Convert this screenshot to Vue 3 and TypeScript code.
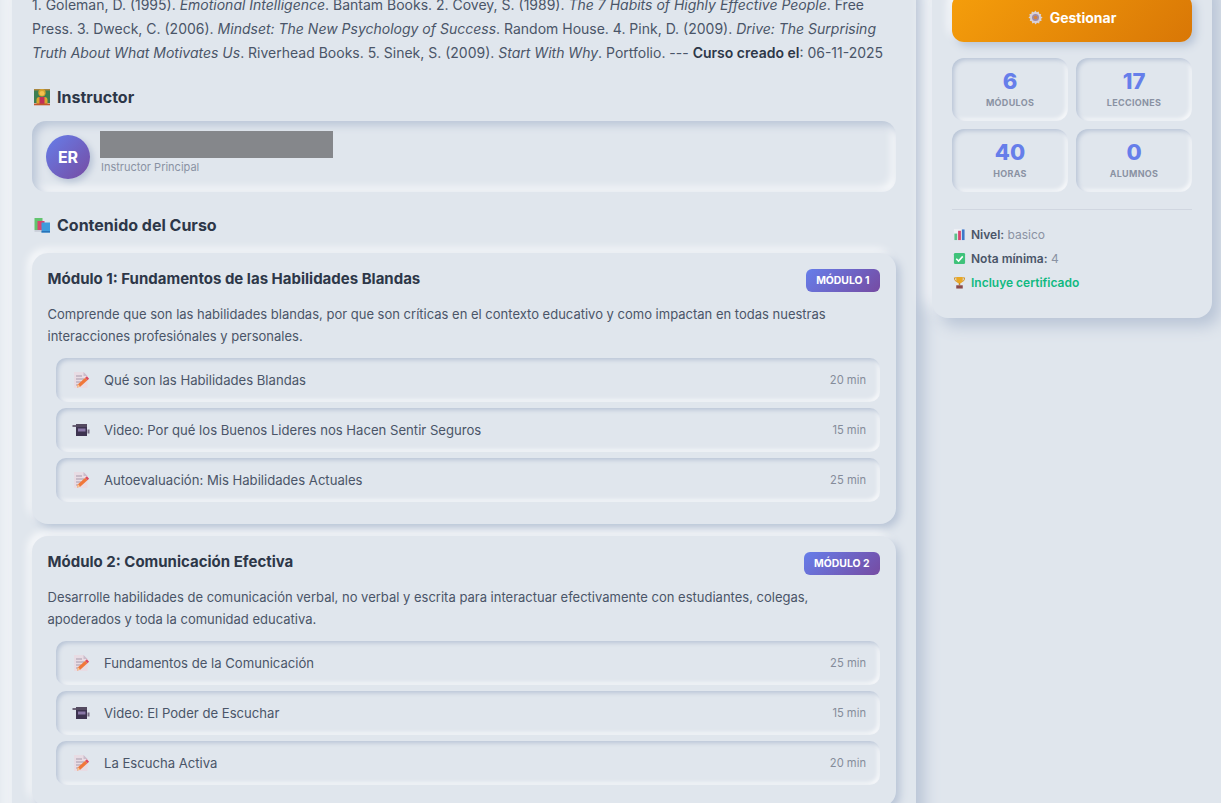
<script setup lang="ts">
interface Lesson {
  title: string
  duration: number
  kind: 'text' | 'video'
}

interface CourseModule {
  number: number
  title: string
  description: string
  lessons: Lesson[]
}

const stats = [
  { value: 6, label: 'Módulos' },
  { value: 17, label: 'Lecciones' },
  { value: 40, label: 'Horas' },
  { value: 0, label: 'Alumnos' },
]

const modules: CourseModule[] = [
  {
    number: 1,
    title: 'Módulo 1: Fundamentos de las Habilidades Blandas',
    description:
      'Comprende que son las habilidades blandas, por que son críticas en el contexto educativo y como impactan en todas nuestras interacciones profesiónales y personales.',
    lessons: [
      { title: 'Qué son las Habilidades Blandas', duration: 20, kind: 'text' },
      { title: 'Video: Por qué los Buenos Lideres nos Hacen Sentir Seguros', duration: 15, kind: 'video' },
      { title: 'Autoevaluación: Mis Habilidades Actuales', duration: 25, kind: 'text' },
    ],
  },
  {
    number: 2,
    title: 'Módulo 2: Comunicación Efectiva',
    description:
      'Desarrolle habilidades de comunicación verbal, no verbal y escrita para interactuar efectivamente con estudiantes, colegas, apoderados y toda la comunidad educativa.',
    lessons: [
      { title: 'Fundamentos de la Comunicación', duration: 25, kind: 'text' },
      { title: 'Video: El Poder de Escuchar', duration: 15, kind: 'video' },
      { title: 'La Escucha Activa', duration: 20, kind: 'text' },
    ],
  },
]
</script>

<template>
  <div class="viewport">
    <div class="page">
      <main class="main-card">
        <p class="references">
          1. Goleman, D. (1995). <em>Emotional Intelligence</em>. Bantam Books. 2. Covey, S. (1989). <em>The 7 Habits of Highly Effective People</em>. Free Press. 3. Dweck, C. (2006). <em>Mindset: The New Psychology of Success</em>. Random House. 4. Pink, D. (2009). <em>Drive: The Surprising Truth About What Motivates Us</em>. Riverhead Books. 5. Sinek, S. (2009). <em>Start With Why</em>. Portfolio. --- <strong>Curso creado el</strong>: 06-11-2025
        </p>

        <h2 class="section-title first">
          <svg class="title-icon" viewBox="0 0 18 18">
            <rect x="1" y="1.500" width="16" height="13.500" fill="#3c7f52" />
            <rect x="1" y="1" width="16" height="1.500" fill="#a8863f" />
            <circle cx="9" cy="4.800" r="3.700" fill="#d4a12e" />
            <circle cx="9" cy="5.300" r="2.400" fill="#f2c14e" />
            <path d="M3.500 17v-5q0-3 3-3h5q3 0 3 3v5z" fill="#d9a52e" />
            <rect x="6.500" y="9" width="5" height="8" fill="#c22e58" />
            <rect x="1" y="15.500" width="16" height="1.800" fill="#c2562c" />
          </svg>
          Instructor
        </h2>
        <div class="instructor">
          <div class="avatar">ER</div>
          <div class="instructor-info">
            <div class="redacted"></div>
            <div class="instructor-role">Instructor Principal</div>
          </div>
        </div>

        <h2 class="section-title">
          <svg class="title-icon" viewBox="0 0 18 18">
            <rect x="1.500" y="2" width="8" height="12" fill="#62c46e" />
            <rect x="4.500" y="5" width="7" height="10" fill="#d8456f" />
            <rect x="8.500" y="6.500" width="8.500" height="10" fill="#3f9bdc" />
            <rect x="1.500" y="14" width="7" height="1.800" fill="#c9ced8" />
            <rect x="8.500" y="15" width="8.500" height="1.500" fill="#2a73b8" />
          </svg>
          Contenido del Curso
        </h2>

        <section v-for="mod in modules" :key="mod.number" class="module">
          <div class="module-head">
            <h3 class="module-title">{{ mod.title }}</h3>
            <span class="module-badge">MÓDULO {{ mod.number }}</span>
          </div>
          <p class="module-desc">{{ mod.description }}</p>
          <div class="lessons">
            <div v-for="lesson in mod.lessons" :key="lesson.title" class="lesson">
              <span class="lesson-icon">
                <svg v-if="lesson.kind === 'text'" viewBox="0 0 18 18" width="18" height="18">
                  <path d="M2 1h9.500l4 4V17H2z" fill="#e8dce4" />
                  <path d="M11.500 1v4h4z" fill="#cbbccb" />
                  <path d="M4 5h6M4 8h8M4 11h5M4 14h2" stroke="#a89aac" stroke-width="1" />
                  <path d="M5 16.500l1-3.200 7.200-6.500 2.200 2.400-7.200 6.500z" fill="#f0783a" />
                  <path d="M13.200 6.800l2.200 2.400 1.700-1.500-2.200-2.400z" fill="#dc4a62" />
                  <path d="M5 16.500l1-3.200 2.200 2.200z" fill="#f6c89a" />
                </svg>
                <svg v-else viewBox="0 0 18 18" width="18" height="18">
                  <rect x="0.500" y="4" width="3.500" height="2" fill="#6d6478" />
                  <rect x="4" y="3" width="11" height="12" fill="#3d3350" />
                  <rect x="4" y="3" width="11" height="3" fill="#544a60" />
                  <rect x="6" y="7.500" width="7.500" height="3" fill="#8a78a8" />
                  <rect x="15.500" y="8.500" width="2" height="4" fill="#7a7088" />
                </svg>
              </span>
              <span class="lesson-title">{{ lesson.title }}</span>
              <span class="lesson-time">{{ lesson.duration }} min</span>
            </div>
          </div>
        </section>
      </main>

      <aside class="side-card">
        <button class="manage-btn">
          <svg viewBox="0 0 18 18" width="15" height="15">
            <path d="M9 .5l1.400 2.200 2.500-.8.500 2.500 2.500.6-.7 2.500L17.500 9l-1.800 1.500.7 2.500-2.500.6-.5 2.500-2.500-.8L9 17.500l-1.400-2.200-2.500.8-.5-2.500-2.500-.6.7-2.500L.5 9l1.800-1.500-.7-2.500 2.500-.6.5-2.500 2.500.8z" fill="#d8d0d8" />
            <circle cx="9" cy="9" r="4.200" fill="#a08aa8" />
            <circle cx="9" cy="9" r="2.200" fill="#d8843a" />
          </svg>
          Gestionar
        </button>

        <div class="stats">
          <div v-for="stat in stats" :key="stat.label" class="stat">
            <div class="stat-value">{{ stat.value }}</div>
            <div class="stat-label">{{ stat.label }}</div>
          </div>
        </div>

        <div class="info">
          <div class="info-row">
            <svg viewBox="0 0 14 14" width="13" height="13">
              <rect x="1" y="1" width="12" height="12" fill="#edf0f4" />
              <rect x="1.500" y="6" width="3" height="7" fill="#5fc08a" />
              <rect x="5.500" y="3" width="3" height="10" fill="#d8456f" />
              <rect x="9.500" y="1.500" width="3" height="11.500" fill="#3d78c9" />
            </svg>
            <span><strong>Nivel:</strong> basico</span>
          </div>
          <div class="info-row">
            <svg viewBox="0 0 14 14" width="13" height="13">
              <rect x="1" y="1" width="12" height="12" rx="1.500" fill="#3fc27a" />
              <path d="M3.500 7.200l2.500 2.500 4.500-5" fill="none" stroke="#fff" stroke-width="1.700" />
            </svg>
            <span><strong>Nota mínima:</strong> 4</span>
          </div>
          <div class="info-row cert">
            <svg viewBox="0 0 14 14" width="13" height="13">
              <path d="M3.500 1h7v3.500q0 3-3.500 3.500-3.500-.5-3.500-3.500z" fill="#e9a825" />
              <path d="M3.500 2H1.500q0 3.500 2.500 4M10.500 2h2q0 3.500-2.500 4" fill="none" stroke="#d08f1c" stroke-width="1" />
              <rect x="6.200" y="7.500" width="1.600" height="2.500" fill="#c98a20" />
              <rect x="3.500" y="10" width="7" height="3.500" fill="#8c4a4a" />
            </svg>
            <span>Incluye certificado</span>
          </div>
        </div>
      </aside>
    </div>
  </div>
</template>

<style scoped>
.viewport {
  height: 803px;
  overflow: hidden;
}

.page {
  display: grid;
  grid-template-columns: 904px 280px;
  gap: 16px;
  align-items: start;
  margin-top: -26px;
  padding-left: 12px;
  font-family: Inter, "Liberation Sans", sans-serif;
}

.main-card,
.side-card {
  background: #e0e6ed;
  border-radius: 16px;
  box-shadow: 8px 8px 16px #b8c4d6, -8px -8px 16px rgba(255, 255, 255, 0.75);
}

.main-card {
  padding: 19px 20px 20px;
}

.references {
  margin: 0;
  font-size: 14px;
  line-height: 24px;
  color: #4a5568;
}

.references strong {
  font-weight: 600;
  color: #2d3748;
}

.section-title {
  display: flex;
  align-items: center;
  gap: 6px;
  margin: 22px 0 14px 1px;
  height: 20px;
  font-size: 16px;
  font-weight: 700;
  color: #2d3748;
}

.section-title:not(.first) {
  margin-top: 23px;
  margin-bottom: 18px;
}

.title-icon {
  width: 18px;
  height: 18px;
}

.instructor {
  display: flex;
  align-items: center;
  gap: 10px;
  height: 71px;
  padding: 0 14px;
  box-sizing: border-box;
  border-radius: 14px;
  background: #e0e6ed;
  box-shadow: inset 4px 4px 8px #b8c4d6, inset -4px -4px 8px rgba(255, 255, 255, 0.8);
}

.avatar {
  display: flex;
  align-items: center;
  justify-content: center;
  flex: none;
  width: 44px;
  height: 44px;
  border-radius: 50%;
  background: linear-gradient(135deg, #667eea, #764ba2);
  box-shadow: 3px 3px 6px #b8c4d6;
  color: #fff;
  font-size: 16px;
  font-weight: 700;
}

.instructor-info {
  align-self: flex-start;
  padding-top: 10px;
}

.redacted {
  width: 233px;
  height: 27px;
  background: #85878b;
}

.instructor-role {
  margin: 2px 0 0 1px;
  font-size: 11px;
  line-height: 14px;
  color: #8a92a3;
}

.module {
  margin-bottom: 12px;
  padding: 16px 16px 22px 15.500px;
  border-radius: 16px;
  background: #e0e6ed;
  box-shadow: 4px 4px 8px #b8c4d6, -4px -4px 8px rgba(255, 255, 255, 0.8);
}

.module-head {
  display: flex;
  justify-content: space-between;
  height: 23px;
}

.module-title {
  margin: 0;
  font-size: 15px;
  line-height: 20px;
  font-weight: 700;
  color: #2d3748;
}

.module-badge {
  padding: 0 10.500px;
  line-height: 23px;
  border-radius: 6px;
  background: linear-gradient(135deg, #667eea, #764ba2);
  color: #fff;
  font-size: 10.400px;
  font-weight: 700;
}

.module-desc {
  margin: 11px 0 11px;
  font-size: 13px;
  line-height: 22px;
  color: #4a5568;
}

.lessons {
  display: flex;
  flex-direction: column;
  gap: 6px;
  margin-left: 8.500px;
}

.lesson {
  display: flex;
  align-items: center;
  height: 44px;
  padding: 0 14px 0 16px;
  box-sizing: border-box;
  border-radius: 10px;
  background: #e0e6ed;
  box-shadow: inset 2px 2px 4px #b8c4d6, inset -2px -2px 4px rgba(255, 255, 255, 0.85);
}

.lesson-icon {
  display: flex;
  flex: none;
  width: 32px;
}

.lesson-title {
  flex: 1;
  font-size: 13.120px;
  color: #4a5568;
}

.lesson-time {
  font-size: 11.200px;
  color: #858c9a;
}

.side-card {
  padding: 20px;
  height: 344px;
  box-sizing: border-box;
}

.manage-btn {
  display: flex;
  align-items: center;
  justify-content: center;
  gap: 7px;
  width: 100%;
  height: 48px;
  padding: 0 0 2px;
  border: none;
  border-radius: 12px;
  background: linear-gradient(135deg, #f59e0b, #d97706);
  box-shadow: 4px 4px 8px #b8c4d6, -4px -4px 8px rgba(255, 255, 255, 0.8);
  color: #fff;
  font-family: inherit;
  font-size: 14px;
  font-weight: 700;
}

.stats {
  display: grid;
  grid-template-columns: 1fr 1fr;
  gap: 8px;
  margin-top: 16px;
}

.stat {
  padding: 10px 0 10px;
  height: 63px;
  box-sizing: border-box;
  border-radius: 12px;
  text-align: center;
  box-shadow: inset 2px 2px 4px #b8c4d6, inset -2px -2px 4px rgba(255, 255, 255, 0.85);
}

.stat-value {
  font-size: 22px;
  line-height: 26px;
  font-weight: 800;
  color: #667eea;
}

.stat-label {
  margin-top: 3px;
  font-size: 9px;
  line-height: 12px;
  font-weight: 700;
  letter-spacing: 0.3px;
  text-transform: uppercase;
  color: #8a92a3;
}

.info {
  margin-top: 17px;
  padding-top: 12px;
  padding-left: 1px;
  border-top: 1px solid #d0d6e0;
}

.info-row {
  display: flex;
  align-items: center;
  gap: 5px;
  height: 24px;
  font-size: 12px;
  color: #8a92a3;
}

.info-row strong {
  font-weight: 600;
  color: #4a5568;
}

.info-row.cert {
  font-weight: 600;
  color: #10b981;
}
</style>

<style>
body {
  background: #e0e6ed;
  overflow: hidden;
}
</style>
